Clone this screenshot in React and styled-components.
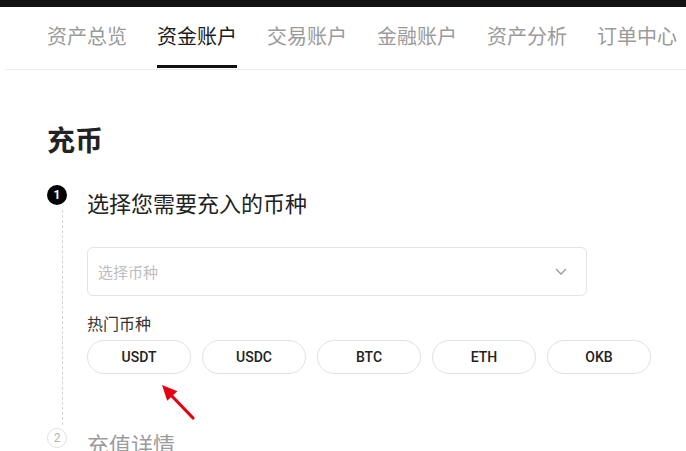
import React from "react";
import styled, { createGlobalStyle } from "styled-components";

const Global = createGlobalStyle`
  html, body { margin: 0; padding: 0; background: #fff; }
  body {
    font-family: "Noto Sans CJK SC", "Noto Sans", sans-serif;
    color: #222;
    overflow: hidden;
  }
`;

const TopBar = styled.div`
  height: 7px;
  background: #121212;
`;

const Nav = styled.nav`
  margin-left: 5px;
  padding: 0 0 1px 42px;
  border-bottom: 1px solid #ececec;
  display: flex;
  gap: 30px;
  white-space: nowrap;
  overflow: hidden;
`;

const Tab = styled.div`
  height: 58px;
  display: flex;
  align-items: center;
  font-size: 20px;
  line-height: 1;
  color: ${(p) => (p.$active ? "#1a1a1a" : "#9a9a9a")};
  border-bottom: 3px solid ${(p) => (p.$active ? "#111" : "transparent")};
`;

const Main = styled.main`
  padding-left: 47px;
`;

const Title = styled.h1`
  margin: 49px 0 26px;
  font-size: 28px;
  line-height: 40px;
  font-weight: 700;
  color: #222;
`;

const StepHead = styled.div`
  display: flex;
  align-items: flex-start;
  gap: 20px;
  height: 34px;
  margin-top: ${(p) => p.$mt || 0}px;
`;

const StepNum = styled.div`
  width: 20px;
  height: 20px;
  box-sizing: border-box;
  border-radius: 50%;
  flex: none;
  display: flex;
  align-items: center;
  justify-content: center;
  font-family: Roboto, "Liberation Sans", sans-serif;
  font-size: 12px;
  font-weight: ${(p) => (p.$active ? 700 : 400)};
  background: ${(p) => (p.$active ? "#000" : "#fff")};
  color: ${(p) => (p.$active ? "#fff" : "#b5b5b5")};
  border: ${(p) => (p.$active ? "none" : "1.5px solid #e2e2e2")};
  margin-top: ${(p) => (p.$active ? 0 : 0)}px;
`;

const StepTitle = styled.div`
  font-size: 22px;
  line-height: 34px;
  margin-top: ${(p) => (p.$active ? 0 : -2)}px;
  color: ${(p) => (p.$active ? "#222" : "#9c9c9c")};
`;

const StepBody = styled.div`
  margin: -9px 0 0 15px;
  padding: 37px 0 51px 24px;
  border-left: 1px dashed #d4d4d4;
`;

const Select = styled.div`
  width: 500px;
  height: 49px;
  box-sizing: border-box;
  border: 1px solid #e4e4e4;
  border-radius: 6px;
  display: flex;
  align-items: center;
  justify-content: space-between;
  padding: 0 19px 0 10px;
`;

const Placeholder = styled.span`
  font-size: 15px;
  color: #bdbdbd;
`;

const HotLabel = styled.div`
  margin-top: 16px;
  font-size: 16px;
  line-height: 22px;
  color: #333;
`;

const Chips = styled.div`
  position: relative;
  margin-top: 6px;
  display: flex;
  gap: 11px;
`;

const Chip = styled.button`
  width: 104px;
  height: 34px;
  box-sizing: border-box;
  border: 1px solid #e2e2e2;
  border-radius: 17px;
  background: #fff;
  font-family: Roboto, "Liberation Sans", sans-serif;
  font-size: 14px;
  font-weight: 500;
  color: #222;
  padding: 0;
  cursor: pointer;
`;

const Arrow = styled.svg`
  position: absolute;
  left: 68px;
  top: 40px;
  overflow: visible;
`;

const coins = ["USDT", "USDC", "BTC", "ETH", "OKB"];
const tabs = ["资产总览", "资金账户", "交易账户", "金融账户", "资产分析", "订单中心"];

export default function App() {
  return (
    <>
      <Global />
      <TopBar />
      <Nav>
        {tabs.map((t, i) => (
          <Tab key={t} $active={i === 1}>
            {t}
          </Tab>
        ))}
      </Nav>
      <Main>
        <Title>充币</Title>
        <StepHead>
          <StepNum $active>1</StepNum>
          <StepTitle $active>选择您需要充入的币种</StepTitle>
        </StepHead>
        <StepBody>
          <Select>
            <Placeholder>选择币种</Placeholder>
            <svg width="12" height="7" viewBox="0 0 12 7">
              <polyline
                points="1,1 6,6 11,1"
                fill="none"
                stroke="#9a9a9a"
                strokeWidth="1.3"
              />
            </svg>
          </Select>
          <HotLabel>热门币种</HotLabel>
          <Chips>
            {coins.map((c) => (
              <Chip key={c}>{c}</Chip>
            ))}
            <Arrow width="45" height="45" viewBox="0 0 45 45">
              <line x1="38" y1="38" x2="14" y2="13" stroke="#e60012" strokeWidth="3.2" strokeLinecap="round" />
              <polygon points="7,5 22.4,11.2 12.2,20.8" fill="#e60012" />
            </Arrow>
          </Chips>
        </StepBody>
        <StepHead $mt={3}>
          <StepNum>2</StepNum>
          <StepTitle>充值详情</StepTitle>
        </StepHead>
      </Main>
    </>
  );
}
